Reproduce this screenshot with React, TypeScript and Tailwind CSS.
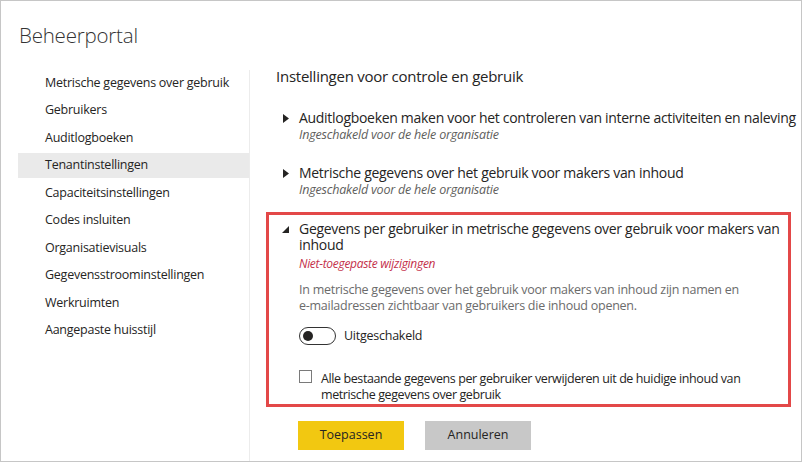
import React, { useState } from 'react';

const navItems = [
  'Metrische gegevens over gebruik',
  'Gebruikers',
  'Auditlogboeken',
  'Tenantinstellingen',
  'Capaciteitsinstellingen',
  'Codes insluiten',
  'Organisatievisuals',
  'Gegevensstroominstellingen',
  'Werkruimten',
  'Aangepaste huisstijl',
];

const Caret: React.FC<{ open?: boolean }> = ({ open }) =>
  open ? (
    <svg width="7" height="7" viewBox="0 0 7 7" className="mt-[5px] shrink-0">
      <polygon points="7,0 7,7 0,7" fill="#252423" />
    </svg>
  ) : (
    <svg width="6" height="9" viewBox="0 0 6 9" className="mt-[5px] shrink-0">
      <polygon points="0,0 6,4.5 0,9" fill="#252423" />
    </svg>
  );

const App: React.FC = () => {
  const [enabled, setEnabled] = useState(false);
  const [purge, setPurge] = useState(false);

  return (
    <div
      className="w-[802px] h-[462px] border border-[#c6c6c6] bg-white text-[#252423] overflow-hidden flex flex-col"
      style={{ fontFamily: '"Open Sans", "Noto Sans", sans-serif' }}
    >
      <h1 className="pl-[18px] pt-[19px] h-[61px] text-[20.5px] leading-[30px] font-light text-[#333] tracking-[-0.2px]">
        Beheerportal
      </h1>

      <div className="flex flex-1">
        <nav className="w-[232px] shrink-0 ml-[17px] mt-[8px] border-r border-[#ececec] flex flex-col gap-[2.5px]">
          {navItems.map((item) => (
            <div
              key={item}
              className={`h-[25px] pl-[27px] pt-[1px] flex items-center text-[12.5px] tracking-[-0.25px] ${
                item === 'Tenantinstellingen' ? 'bg-[#eaeaea]' : ''
              }`}
            >
              {item}
            </div>
          ))}
        </nav>

        <main className="flex-1 min-w-0 pl-[16px] pt-[4px]">
          <h2 className="pl-[10px] text-[15px] leading-[20px] tracking-[-0.25px]">
            Instellingen voor controle en gebruik
          </h2>

          <div className="mt-[23px] pl-[17px] flex gap-[10px]">
            <Caret />
            <div>
              <div className="text-[14px] leading-[18px] tracking-[-0.3px] whitespace-nowrap">
                Auditlogboeken maken voor het controleren van interne activiteiten en naleving
              </div>
              <div className="text-[12.5px] leading-[16px] italic text-[#605e5c] tracking-[-0.2px]">
                Ingeschakeld voor de hele organisatie
              </div>
            </div>
          </div>

          <div className="mt-[21px] pl-[17px] flex gap-[10px]">
            <Caret />
            <div>
              <div className="text-[14px] leading-[18px] tracking-[-0.3px]">
                Metrische gegevens over het gebruik voor makers van inhoud
              </div>
              <div className="text-[12.5px] leading-[16px] italic text-[#605e5c] tracking-[-0.2px]">
                Ingeschakeld voor de hele organisatie
              </div>
            </div>
          </div>

          <section className="mt-[14px] w-[525px] border-[3px] border-[#e34848] pt-[6px] pb-[1px] pl-[13px] pr-[8px] flex gap-[10px]">
            <Caret open />
            <div className="flex-1">
              <div className="text-[14px] leading-[16px] tracking-[-0.3px]">
                Gegevens per gebruiker in metrische gegevens over gebruik voor makers van inhoud
              </div>
              <div className="mt-[3px] text-[12px] leading-[16px] italic text-[#c4314b] tracking-[-0.3px]">
                Niet-toegepaste wijzigingen
              </div>
              <p className="mt-[10px] text-[12.5px] leading-[16px] text-[#6b6b6b] tracking-[-0.25px]">
                In metrische gegevens over het gebruik voor makers van inhoud zijn namen en
                <br />
                e-mailadressen zichtbaar van gebruikers die inhoud openen.
              </p>

              <div className="mt-[13px] flex items-center gap-[8px]">
                <button
                  onClick={() => setEnabled(!enabled)}
                  className={`w-[37px] h-[18px] rounded-full border border-[#333] flex items-center px-[3px] ${
                    enabled ? 'justify-end bg-[#333]' : 'justify-start bg-white'
                  }`}
                >
                  <span className={`w-[10px] h-[10px] rounded-full ${enabled ? 'bg-white' : 'bg-[#252423]'}`} />
                </button>
                <span className="text-[12.5px] tracking-[-0.25px]">{enabled ? 'Ingeschakeld' : 'Uitgeschakeld'}</span>
              </div>

              <label className="mt-[25px] flex gap-[9px] cursor-pointer">
                <span
                  onClick={() => setPurge(!purge)}
                  className="mt-[-1px] w-[13px] h-[13px] border border-[#7a7a7a] bg-white shrink-0"
                />
                <span className="text-[12.5px] leading-[16px] tracking-[-0.4px]">
                  Alle bestaande gegevens per gebruiker verwijderen uit de huidige inhoud van metrische gegevens over gebruik
                </span>
              </label>
            </div>
          </section>

          <div className="mt-[14px] pl-[32px] flex gap-[21px]">
            <button className="w-[106px] h-[29px] bg-[#f2c811] text-[12.5px] text-[#252423]">Toepassen</button>
            <button className="w-[106px] h-[29px] bg-[#c8c8c8] text-[12.5px] text-[#252423]">Annuleren</button>
          </div>
        </main>
      </div>
    </div>
  );
};

export default App;
